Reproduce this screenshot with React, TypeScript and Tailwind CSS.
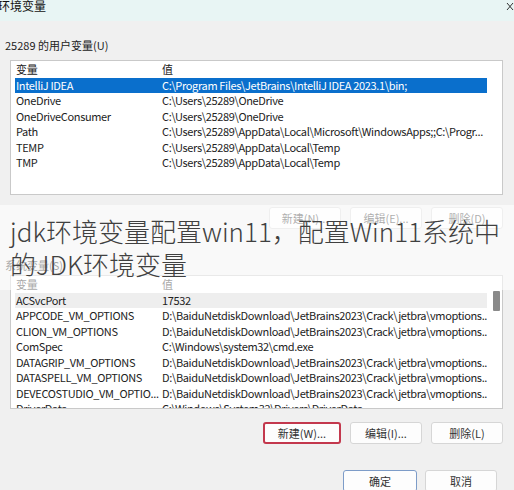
import React from "react";

const userVars = [
  { name: "IntelliJ IDEA", value: "C:\\Program Files\\JetBrains\\IntelliJ IDEA 2023.1\\bin;" },
  { name: "OneDrive", value: "C:\\Users\\25289\\OneDrive" },
  { name: "OneDriveConsumer", value: "C:\\Users\\25289\\OneDrive" },
  { name: "Path", value: "C:\\Users\\25289\\AppData\\Local\\Microsoft\\WindowsApps;;C:\\Progr..." },
  { name: "TEMP", value: "C:\\Users\\25289\\AppData\\Local\\Temp" },
  { name: "TMP", value: "C:\\Users\\25289\\AppData\\Local\\Temp" },
];

const sysVars = [
  { name: "ACSvcPort", value: "17532" },
  { name: "APPCODE_VM_OPTIONS", value: "D:\\BaiduNetdiskDownload\\JetBrains2023\\Crack\\jetbra\\vmoptions..." },
  { name: "CLION_VM_OPTIONS", value: "D:\\BaiduNetdiskDownload\\JetBrains2023\\Crack\\jetbra\\vmoptions..." },
  { name: "ComSpec", value: "C:\\Windows\\system32\\cmd.exe" },
  { name: "DATAGRIP_VM_OPTIONS", value: "D:\\BaiduNetdiskDownload\\JetBrains2023\\Crack\\jetbra\\vmoptions..." },
  { name: "DATASPELL_VM_OPTIONS", value: "D:\\BaiduNetdiskDownload\\JetBrains2023\\Crack\\jetbra\\vmoptions..." },
  { name: "DEVECOSTUDIO_VM_OPTIO...", value: "D:\\BaiduNetdiskDownload\\JetBrains2023\\Crack\\jetbra\\vmoptions..." },
  { name: "DriverData", value: "C:\\Windows\\System32\\Drivers\\DriverData" },
];

function Row({ name, value, selected, dim }: { name: string; value: string; selected?: boolean; dim?: boolean }) {
  let cls = "flex h-[15.5px] leading-[15.5px] w-[472px] whitespace-nowrap overflow-hidden text-[11px] tracking-[-0.35px]";
  if (selected) cls += " bg-[#0a6fcc] text-white";
  else if (dim) cls += " bg-[#eeeeee] text-[#222]";
  else cls += " text-[#222]";
  return (
    <div className={cls}>
      <span className="w-[147px] pl-[1px] shrink-0">{name}</span>
      <span>{value}</span>
    </div>
  );
}

function Btn({ label, variant }: { label: string; variant?: "red" | "blue" }) {
  let cls = "h-[22px] flex items-center justify-center rounded-[3px] bg-[#fdfdfd] text-[11px] text-[#333]";
  if (variant === "red") cls += " border-2 border-[#c3384d] w-[78px]";
  else if (variant === "blue") cls += " border border-[#7d9cc8] w-[74px]";
  else cls += " border border-[#d6d6d6] w-[72px]";
  return <div className={cls}>{label}</div>;
}

export default function App() {
  return (
    <div className="relative w-[514px] h-[490px] overflow-hidden bg-[#f0f0f0] text-[12px] font-['Noto_Sans_CJK_SC',sans-serif]">
      {/* title bar */}
      <div className="h-[21px] bg-[#e8f5f4] flex items-start justify-between">
        <span className="-ml-[2px] -mt-[1px] leading-[14px] text-[12px] text-[#111]">环境变量</span>
        <svg width="8" height="9" viewBox="0 0 8 9" className="mt-[2px]">
          <path d="M1 1 L7 8 M7 1 L1 8" stroke="#333" strokeWidth="1" fill="none" />
        </svg>
      </div>

      <div className="pl-[5px] pr-[11px]">
        <div className="mt-[17px] h-[14px] leading-[14px] text-[11px] text-[#222]">25289 的用户变量(U)</div>

        <div className="ml-[5px] mt-[8px] h-[135px] border border-[#c9c9c9] bg-white pl-[4px] pt-[1px]">
          <Row name="变量" value="值" />
          {userVars.map((v, i) => (
            <Row key={v.name} name={v.name} value={v.value} selected={i === 0} />
          ))}
        </div>

        <div className="mt-[12px] flex justify-end gap-[9px]">
          <Btn label="新建(N)..." />
          <Btn label="编辑(E)..." />
          <Btn label="删除(D)" />
        </div>

        <div className="mt-[29px] h-[14px] leading-[14px] text-[11px] text-[#222]">系统变量(S)</div>

        <div className="ml-[5px] mt-[3px] h-[134px] border border-[#c9c9c9] bg-white pl-[4px] pt-[1px] flex">
          <div className="overflow-hidden">
            <Row name="变量" value="值" />
            {sysVars.map((v, i) => (
              <Row key={v.name} name={v.name} value={v.value} dim={i === 0} />
            ))}
          </div>
          <div className="ml-[6px] mt-[14px] w-[7px] flex flex-col">
            <div className="h-[20px] bg-[#8a8a8a] rounded-[1px]" />
          </div>
        </div>

        <div className="mt-[13px] flex justify-end gap-[9px]">
          <Btn label="新建(W)..." variant="red" />
          <Btn label="编辑(I)..." />
          <Btn label="删除(L)" />
        </div>

        <div className="mt-[26px] flex justify-end gap-[8px] pr-[6px]">
          <Btn label="确定" variant="blue" />
          <Btn label="取消" />
        </div>
      </div>

      {/* article title overlay */}
      <div className="absolute left-0 right-0 top-[205px] h-[85px] bg-white/60" />
      <div className="absolute left-[10px] top-[214px] text-[26px] leading-[33px] font-light text-[#404040] whitespace-nowrap">
        <div>jdk环境变量配置win11，配置Win11系统中</div>
        <div>的JDK环境变量</div>
      </div>
    </div>
  );
}
